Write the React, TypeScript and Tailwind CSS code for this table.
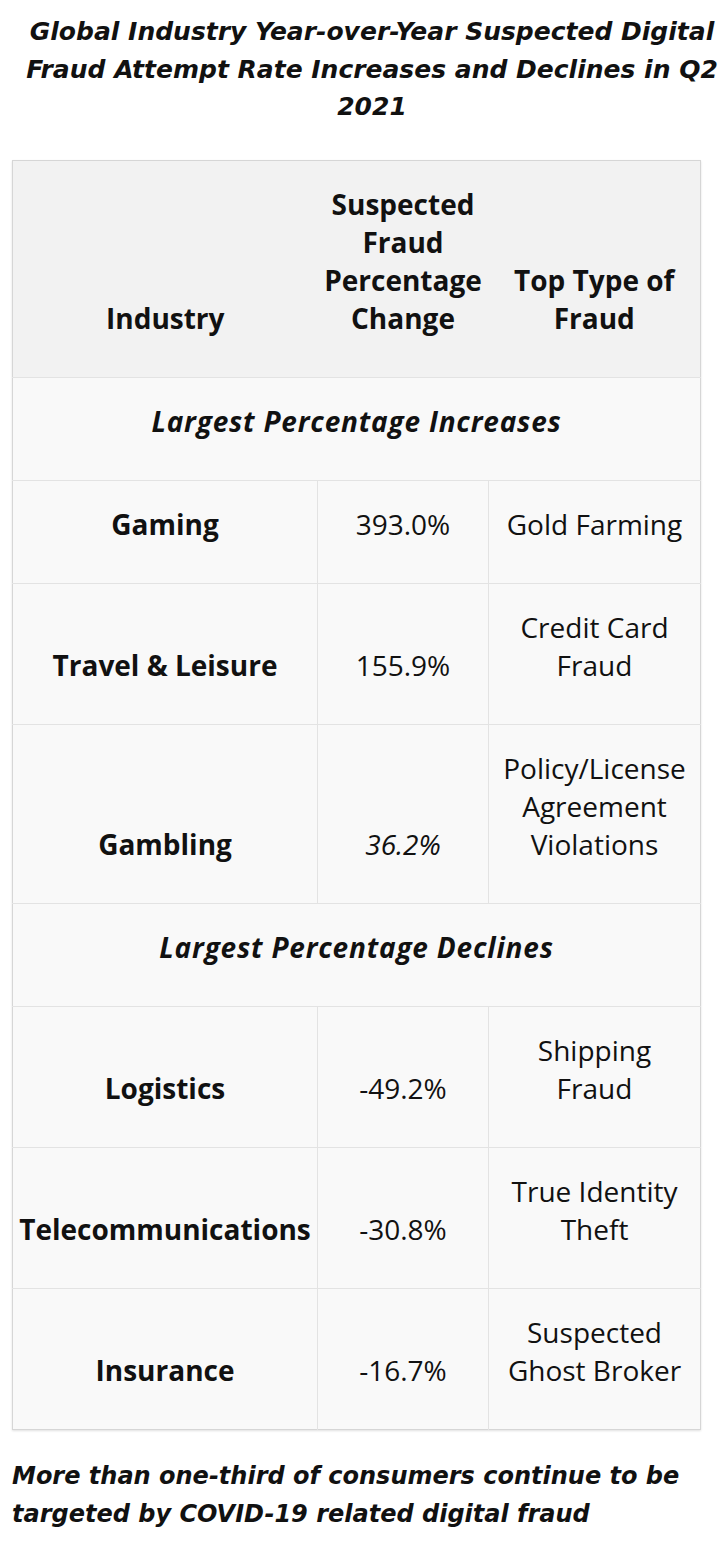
import React from 'react';

interface Row {
  industry: string;
  change: string;
  type: string[];
  italicChange?: boolean;
}

const increases: Row[] = [
  { industry: 'Gaming', change: '393.0%', type: ['Gold Farming'] },
  { industry: 'Travel & Leisure', change: '155.9%', type: ['Credit Card', 'Fraud'] },
  { industry: 'Gambling', change: '36.2%', type: ['Policy/License', 'Agreement', 'Violations'], italicChange: true },
];

const declines: Row[] = [
  { industry: 'Logistics', change: '-49.2%', type: ['Shipping', 'Fraud'] },
  { industry: 'Telecommunications', change: '-30.8%', type: ['True Identity', 'Theft'] },
  { industry: 'Insurance', change: '-16.7%', type: ['Suspected', 'Ghost Broker'] },
];

const cell = 'pt-[24px] pb-[40px] px-[6px] align-bottom text-center leading-[38px]';
const heading = { fontFamily: '"DejaVu Sans", "Liberation Sans", sans-serif' };

const SectionRow: React.FC<{ label: string }> = ({ label }) => (
  <tr className="border-b border-[#e3e3e3]">
    <td colSpan={3} className={`${cell} font-bold italic tracking-[0.8px]`}>
      {label}
    </td>
  </tr>
);

const DataRow: React.FC<{ row: Row }> = ({ row }) => (
  <tr className="border-b border-[#e3e3e3] last:border-b-0">
    <td className={`${cell} font-bold border-r border-[#e3e3e3] whitespace-nowrap`}>{row.industry}</td>
    <td className={`${cell} border-r border-[#e3e3e3] ${row.italicChange ? 'italic' : ''}`}>{row.change}</td>
    <td className={`${cell} whitespace-nowrap`}>
      {row.type.map((t, i) => (
        <div key={i}>{t}</div>
      ))}
    </td>
  </tr>
);

export default function App() {
  return (
    <div
      className="w-[720px] min-h-[1543px] bg-white text-[#111] pt-[13px]"
      style={{ fontFamily: '"Open Sans", "Liberation Sans", sans-serif' }}
    >
      <h2
        className="ml-[24px] w-[696px] text-center font-bold italic text-[25px] leading-[37.5px]"
        style={heading}
      >
        <span className="block whitespace-nowrap">Global Industry Year-over-Year Suspected Digital</span>
        <span className="block whitespace-nowrap">Fraud Attempt Rate Increases and Declines in Q2</span>
        <span className="block whitespace-nowrap">2021</span>
      </h2>

      <table className="ml-[12px] mt-[34px] w-[688px] table-fixed border-collapse border border-[#d6d6d6] bg-[#f9f9f9] text-[28px] shadow-[0_1px_2px_rgba(0,0,0,0.12)]">
        <colgroup>
          <col className="w-[305px]" />
          <col className="w-[171px]" />
          <col className="w-[212px]" />
        </colgroup>
        <thead>
          <tr className="bg-[#f2f2f2] border-b border-[#e3e3e3]">
            <th className={`${cell} font-bold`}>Industry</th>
            <th className={`${cell} font-bold`}>
              <div>Suspected</div>
              <div>Fraud</div>
              <div>Percentage</div>
              <div>Change</div>
            </th>
            <th className={`${cell} font-bold`}>
              <div>Top Type of</div>
              <div>Fraud</div>
            </th>
          </tr>
        </thead>
        <tbody>
          <SectionRow label="Largest Percentage Increases" />
          {increases.map((r) => (
            <DataRow key={r.industry} row={r} />
          ))}
          <SectionRow label="Largest Percentage Declines" />
          {declines.map((r) => (
            <DataRow key={r.industry} row={r} />
          ))}
        </tbody>
      </table>

      <p
        className="ml-[12px] mt-[27px] font-bold italic text-[24px] leading-[38px]"
        style={heading}
      >
        <span className="block whitespace-nowrap">More than one-third of consumers continue to be</span>
        <span className="block whitespace-nowrap">targeted by COVID-19 related digital fraud</span>
      </p>
    </div>
  );
}
